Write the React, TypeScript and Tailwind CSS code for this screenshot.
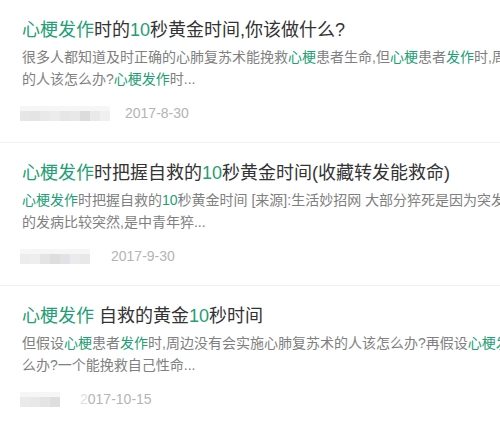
const G = ({ children }: { children: React.ReactNode }) => (
  <span className="text-[#21a074]">{children}</span>
);

type Item = {
  title: React.ReactNode;
  line1: React.ReactNode;
  line2: React.ReactNode;
  cells: string[];
  date: React.ReactNode;
  dateGap: string;
};

const items: Item[] = [
  {
    title: (<><G>心梗发作</G>时的<G>10</G>秒黄金时间,你该做什么?</>),
    line1: (<>很多人都知道及时正确的心肺复苏术能挽救<G>心梗</G>患者生命,但<G>心梗</G>患者<G>发作</G>时,周边没有会实施心肺复苏术</>),
    line2: (<>的人该怎么办?<G>心梗发作</G>时...</>),
    cells: ['#e6e6e6', '#e4e4e4', '#e9e9e9', '#ececec', '#e6e6e6', '#e8e8e8', '#dcdcdc', '#e9e9e9', '#f0f0f0'],
    date: '2017-8-30',
    dateGap: 'ml-[15px]',
  },
  {
    title: (<><G>心梗发作</G>时把握自救的<G>10</G>秒黄金时间(收藏转发能救命)</>),
    line1: (<><G>心梗发作</G>时把握自救的<G>10</G>秒黄金时间 [来源]:生活妙招网 大部分猝死是因为突发心脏病,而心脏病</>),
    line2: '的发病比较突然,是中青年猝...',
    cells: ['#ececec', '#eeeeee', '#e4e4e4', '#dedede', '#e2e2e6', '#ebebeb', '#e8e8ea'],
    date: '2017-9-30',
    dateGap: 'ml-[21px]',
  },
  {
    title: (<><G>心梗发作</G> 自救的黄金<G>10</G>秒时间</>),
    line1: (<>但假设<G>心梗</G>患者<G>发作</G>时,周边没有会实施心肺复苏术的人该怎么办?再假设<G>心梗发作</G>时身边没有人,又该怎</>),
    line2: '么办?一个能挽救自己性命...',
    cells: ['#eaeaea', '#e8e8e8', '#e4e4e4', '#dedede'],
    date: (<><span className="text-[#e0e0e0]">2</span>017-10-15</>),
    dateGap: 'ml-[20px]',
  },
];

export default function App() {
  return (
    <div
      className="w-[500px] h-[425px] overflow-hidden bg-white"
      style={{ fontFamily: '"Liberation Sans", "Noto Sans CJK SC", sans-serif' }}
    >
      {items.map((it, i) => (
        <div key={i} className="pl-[20px] w-[700px] border-b border-[#f0f0f0]">
          <div className="pl-[2px] pt-[18px] pb-[19px]">
            <h3 className="text-[18px] leading-[24px] text-[#333] whitespace-nowrap">{it.title}</h3>
            <p className="mt-[4px] text-[14px] leading-[22px] text-[#808080] whitespace-nowrap">
              {it.line1}
              <br />
              {it.line2}
            </p>
            <div className="mt-[13px] h-[20px] flex items-center -ml-[2px]">
              <div className="flex flex-col h-[15px]">
                <div className="h-[5px] bg-[#f6f6f6]" />
                <div className="flex h-[10px]">
                  {it.cells.map((c, j) => (
                    <div key={j} className="w-[10px] h-full" style={{ background: c }} />
                  ))}
                </div>
              </div>
              <span className={`${it.dateGap} text-[14px] text-[#b4b4b4]`}>{it.date}</span>
            </div>
          </div>
        </div>
      ))}
    </div>
  );
}
